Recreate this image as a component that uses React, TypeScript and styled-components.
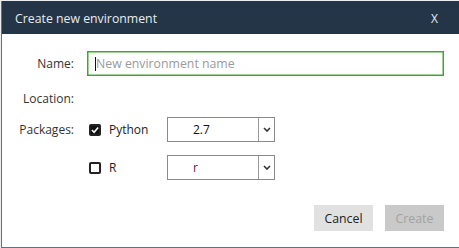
import React from 'react';
import styled, {createGlobalStyle} from "styled-components";

const GlobalStyle = createGlobalStyle`
    html, body {
        margin: 0;
        padding: 0;
        background: #ececec;
        overflow: hidden;
    }
    body {
        font-family: "Open Sans", "Noto Sans", sans-serif;
        font-size: 12px;
        color: #222;
    }
`

const Chevron = () => (
    <svg width="8" height="5" viewBox="0 0 8 5">
        <path d="M1 1 L4 4 L7 1" fill="none" stroke="#333" strokeWidth="1.6"/>
    </svg>
);

const Check = () => (
    <svg width="9" height="8" viewBox="0 0 9 8">
        <path d="M1 4 L3.5 6.5 L8 1.2" fill="none" stroke="#fff" strokeWidth="1.8"/>
    </svg>
);

type Pkg = { name: string, checked: boolean, value: string, valueColor?: string }

const packages: Pkg[] = [
    {name: "Python", checked: true, value: "2.7"},
    {name: "R", checked: false, value: "r", valueColor: "#6a1538"},
];

export default function App() {
    return (
        <>
            <GlobalStyle/>
            <Page>
                <Dialog>
                    <Header>
                        <Title>Create new environment</Title>
                        <Close>X</Close>
                    </Header>
                    <Body>
                        <Row top={17} height={25}>
                            <Label>Name:</Label>
                            <InputWrap>
                                <NameInput placeholder="New environment name"/>
                                <Caret/>
                            </InputWrap>
                        </Row>
                        <Row top={12} height={20}>
                            <Label>Location:</Label>
                        </Row>
                        {packages.map((p, i) => (
                            <Row key={p.name} top={i === 0 ? 9 : 13} height={25}>
                                <Label>{i === 0 ? "Packages:" : ""}</Label>
                                <PkgToggle>
                                    <Box checked={p.checked}>{p.checked && <Check/>}</Box>
                                    <PkgName>{p.name}</PkgName>
                                </PkgToggle>
                                <Select>
                                    <SelectValue color={p.valueColor}>{p.value}</SelectValue>
                                    <SelectArrow><Chevron/></SelectArrow>
                                </Select>
                            </Row>
                        ))}
                        <Footer>
                            <Button>Cancel</Button>
                            <Button disabled>Create</Button>
                        </Footer>
                    </Body>
                </Dialog>
            </Page>
        </>
    );
}

const Page = styled.div`
    width: 459px;
    height: 248px;
    padding: 1px 0 0 1px;
    box-sizing: border-box;
`

const Dialog = styled.div`
    width: 470px;
    height: 247px;
    box-sizing: border-box;
    background: #fff;
    border: 1px solid #5d7381;
    border-top: none;
    display: flex;
    flex-direction: column;
`

const Header = styled.div`
    height: 33px;
    background: #243547;
    display: flex;
    align-items: center;
    justify-content: space-between;
    padding: 1px 32px 0 13px;
    box-sizing: border-box;
`

const Title = styled.span`
    color: #e6ecef;
    font-size: 12.3px;
`

const Close = styled.span`
    color: #e6ecef;
    font-size: 12px;
`

const Body = styled.div`
    display: flex;
    flex-direction: column;
`

const Row = styled.div<{ top: number, height: number }>`
    display: flex;
    align-items: center;
    margin-top: ${p => p.top}px;
    height: ${p => p.height}px;
`

const Label = styled.span`
    width: 72px;
    text-align: right;
    margin-right: 13px;
    color: #333;
`

const InputWrap = styled.div`
    position: relative;
    display: flex;
`

const NameInput = styled.input`
    width: 357px;
    height: 25px;
    box-sizing: border-box;
    border: 1px solid #3ea82b;
    box-shadow: inset 0 0 0 0.5px #3ea82b;
    outline: none;
    padding: 0 8px;
    font-family: "Open Sans", "Noto Sans", sans-serif;
    font-size: 12.3px;
    color: #222;

    &::placeholder {
        color: #9a9a9a;
    }
`

const Caret = styled.span`
    position: absolute;
    left: 8px;
    top: 6px;
    width: 1px;
    height: 14px;
    background: #111;
`

const PkgToggle = styled.div`
    width: 80px;
    display: flex;
    align-items: center;
    padding-left: 2px;
    box-sizing: border-box;
`

const Box = styled.span<{ checked: boolean }>`
    width: 12px;
    height: 12px;
    box-sizing: border-box;
    border-radius: 2px;
    border: 2px solid #222;
    background: ${p => p.checked ? "#111" : "#fff"};
    display: flex;
    align-items: center;
    justify-content: center;
    margin-right: 8px;
`

const PkgName = styled.span`
    color: #222;
`

const Select = styled.div`
    width: 108px;
    height: 25px;
    box-sizing: border-box;
    border: 1px solid #8a8a8a;
    display: flex;
`

const SelectValue = styled.span<{ color?: string }>`
    flex: 1;
    display: flex;
    align-items: center;
    padding-left: 25px;
    color: ${p => p.color || "#111"};
`

const SelectArrow = styled.span`
    width: 15px;
    border-left: 1px solid #9a9a9a;
    display: flex;
    align-items: center;
    justify-content: center;
`

const Footer = styled.div`
    display: flex;
    gap: 12px;
    margin-top: 25px;
    padding-left: 312px;
`

const Button = styled.button`
    width: 59px;
    height: 26px;
    border: none;
    background: ${p => p.disabled ? "#c9c9c9" : "#e1e1e1"};
    color: ${p => p.disabled ? "#a2a2a2" : "#222"};
    font-family: "Open Sans", "Noto Sans", sans-serif;
    font-size: 12.3px;
    padding: 0;
`
